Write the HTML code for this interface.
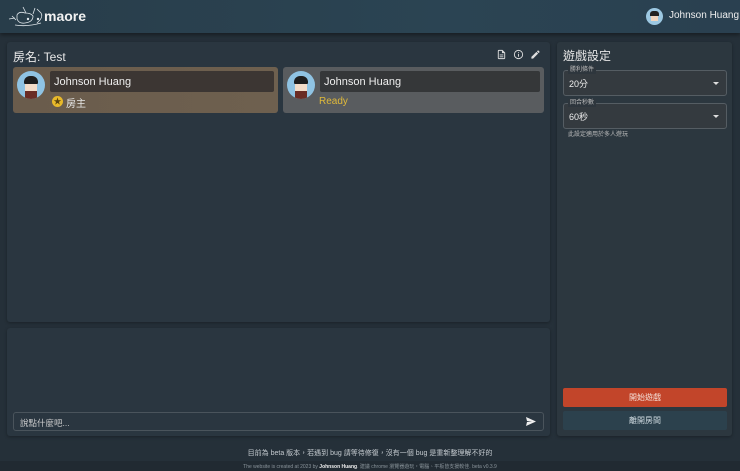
<!DOCTYPE html>
<html><head><meta charset="utf-8"><style>
*{box-sizing:border-box;margin:0;padding:0}
body{width:740px;height:471px;overflow:hidden;background:#253039;font-family:"Liberation Sans","Noto Sans CJK TC",sans-serif;color:#e8e8e8;position:relative}
.hdr{position:absolute;left:0;top:0;width:740px;height:33px;background:linear-gradient(90deg,#283d4a,#2b4453 60%,#2a4050);box-shadow:0 2px 4px rgba(0,0,0,.4)}
.panel{position:absolute;background:#2a3640;border-radius:3px;box-shadow:0 1px 3px rgba(0,0,0,.3)}
.card{position:absolute;top:67px;height:46px;border-radius:3px}
.av{position:absolute;left:4px;top:4px;width:28px;height:28px;border-radius:50%;background:#8fc3e3;overflow:hidden}
.name{position:absolute;left:37px;top:4px;right:4px;height:21px;border-radius:2px;font-size:11px;line-height:22px;padding-left:4px;color:#eee}
.sel{position:absolute;left:563px;width:164px;height:26px;border:1px solid #555d63;border-radius:3px;background:#343a3f;font-size:9px;color:#eee;padding:6px 0 0 5px}
.sel .lb{position:absolute;top:-5px;left:4px;background:#2e363d;padding:0 2px;font-size:6px;color:#bbb;line-height:8px}
.sel .ar{position:absolute;right:7px;top:11px;border:3px solid transparent;border-top:3px solid #ddd}
.btn{position:absolute;left:563px;width:164px;height:19px;border-radius:2px;font-size:8px;text-align:center;line-height:19px}
</style></head><body>
<div class="hdr">
<svg style="position:absolute;left:7px;top:5px" width="40" height="23" viewBox="0 0 40 23" fill="none" stroke="#dfe6ea" stroke-width=".8"><path d="M2 14 L8 13 M5 11 L9 15 M10 10 Q12 6 18 8 Q24 8 26 11 Q26 17 18 18 Q12 19 10 14 Z M16 2 L19 8 M28 3 L26 9 M30 4 L34 8 Q36 11 33 15 L30 18 M8 20 Q20 22 34 18"/><circle cx="21" cy="14" r=".8" fill="#dfe6ea"/><circle cx="31" cy="14" r=".8" fill="#dfe6ea"/></svg>
<div style="position:absolute;left:44px;top:8px;font-size:14px;font-weight:bold;color:#f2f2f2">maore</div>
<div style="position:absolute;left:646px;top:8px;width:17px;height:17px;border-radius:50%;background:#9cc8e2;overflow:hidden"><div style="margin:3px 0 0 4px;width:9px;height:5px;background:#222;border-radius:3px 3px 0 0"></div><div style="margin:0 0 0 5px;width:7px;height:5px;background:#f0d6c0"></div></div>
<div style="position:absolute;left:669px;top:10px;font-size:10px;color:#eee">Johnson Huang</div>
</div>

<div class="panel" style="left:7px;top:42px;width:543px;height:280px">
<div style="position:absolute;left:6px;top:6px;font-size:12px">房名: Test</div>
<svg style="position:absolute;left:489px;top:7px" width="11" height="11" viewBox="0 0 24 24" fill="#ddd"><path d="M14 2H6a2 2 0 0 0-2 2v16a2 2 0 0 0 2 2h12a2 2 0 0 0 2-2V8zm4 18H6V4h7v5h5zM8 12h8v2H8zm0 4h8v2H8z"/></svg>
<svg style="position:absolute;left:506px;top:7px" width="11" height="11" viewBox="0 0 24 24" fill="#ddd"><path d="M11 7h2v2h-2zm0 4h2v6h-2zm1-9a10 10 0 1 0 0 20 10 10 0 0 0 0-20zm0 18a8 8 0 1 1 0-16 8 8 0 0 1 0 16z"/></svg>
<svg style="position:absolute;left:523px;top:7px" width="11" height="11" viewBox="0 0 24 24" fill="#ddd"><path d="M3 17.25V21h3.75L17.81 9.94l-3.75-3.75zM20.71 7.04a1 1 0 0 0 0-1.41l-2.34-2.34a1 1 0 0 0-1.41 0l-1.83 1.83 3.75 3.75z"/></svg>
</div>
<div class="card" style="left:13px;width:265px;background:linear-gradient(90deg,#6a5c4c,#6e604f)">
<div class="av"><div style="margin:5px 0 0 7px;width:14px;height:8px;background:#1e1e1e;border-radius:6px 6px 1px 1px"></div><div style="margin:0 0 0 8px;width:12px;height:7px;background:#f3dcc8"></div><div style="margin:0 0 0 8px;width:12px;height:8px;background:#6a2c25"></div></div>
<div class="name" style="background:#3c3633">Johnson Huang</div>
<div style="position:absolute;left:39px;top:29px;width:11px;height:11px;border-radius:50%;background:#e8b92a;color:#5a4410;font-size:8px;line-height:11px;text-align:center">★</div>
<div style="position:absolute;left:53px;top:28px;font-size:10px;color:#e6e6e6">房主</div>
</div>
<div class="card" style="left:283px;width:261px;background:#595c5f">
<div class="av"><div style="margin:5px 0 0 7px;width:14px;height:8px;background:#1e1e1e;border-radius:6px 6px 1px 1px"></div><div style="margin:0 0 0 8px;width:12px;height:7px;background:#f3dcc8"></div><div style="margin:0 0 0 8px;width:12px;height:8px;background:#6a2c25"></div></div>
<div class="name" style="background:#353739">Johnson Huang</div>
<div style="position:absolute;left:36px;top:29px;font-size:10px;color:#e0b93a">Ready</div>
</div>

<div class="panel" style="left:7px;top:328px;width:543px;height:108px">
<div style="position:absolute;left:6px;top:84px;width:531px;height:19px;border:1px solid #4a545c;border-radius:3px;font-size:8.5px;color:#ccc;padding:4px 0 0 6px">說點什麼吧...</div>
<svg style="position:absolute;left:519px;top:89px" width="10" height="9" viewBox="0 0 10 9" fill="#eee"><path d="M0 0L10 4.5L0 9L1 5L6 4.5L1 4Z"/></svg>
</div>

<div class="panel" style="left:557px;top:42px;width:175px;height:394px;background:#2c373f">
<div style="position:absolute;left:6px;top:5px;font-size:12px;color:#e6e6e6">遊戲設定</div>
</div>
<div class="sel" style="top:70px"><span class="lb">勝利條件</span>20分<span class="ar"></span></div>
<div class="sel" style="top:103px"><span class="lb">回合秒數</span>60秒<span class="ar"></span></div>
<div style="position:absolute;left:568px;top:129px;font-size:6px;color:#bbb">此設定適用於多人遊玩</div>
<div class="btn" style="top:388px;background:#c2452a;color:#f5e0d8">開始遊戲</div>
<div class="btn" style="top:411px;background:#2c414d;color:#cdd8de">離開房間</div>

<div style="position:absolute;left:0;top:448px;width:740px;text-align:center;font-size:7px;color:#c4cacf">目前為 beta 版本，若遇到 bug 請等待修復，沒有一個 bug 是重新整理解不好的</div>
<div style="position:absolute;left:0;top:461px;width:740px;height:10px;background:#212a32"></div>
<div style="position:absolute;left:0;top:463px;width:740px;text-align:center;font-size:5px;color:#8a949b">The website is created at 2023 by <b style="color:#eee">Johnson Huang</b>. 建議 chrome 瀏覽器遊玩，電腦、平板皆支援較佳. beta v0.3.9</div>
</body></html>
